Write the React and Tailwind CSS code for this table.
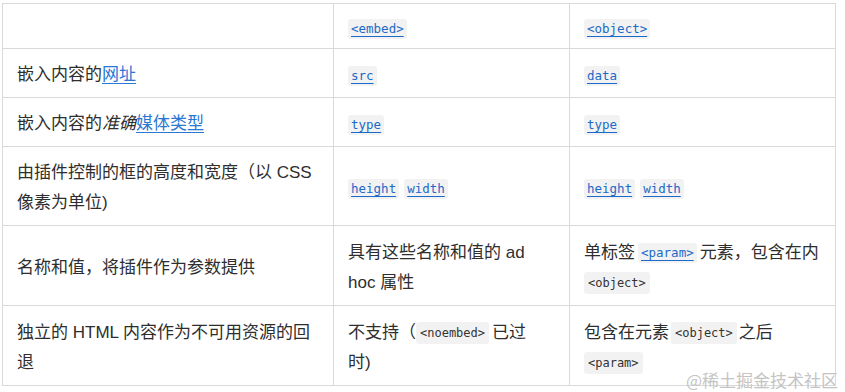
import React from "react";

const body = { fontFamily: '"Liberation Sans", "Noto Sans CJK SC", sans-serif' };
const mono = { fontFamily: '"DejaVu Sans Mono", "Liberation Mono", monospace' };

function CodeLink({ children, className = "" }) {
  return (
    <code
      style={mono}
      className={
        "inline-block rounded-[3px] bg-[#f2f2f2] px-[3px] text-[12.5px] leading-[20px] text-[#1b6ac9] underline decoration-[#1b6ac9] underline-offset-[3px] align-middle " +
        className
      }
    >
      {children}
    </code>
  );
}

function Code({ children, className = "" }) {
  return (
    <code
      style={mono}
      className={
        "inline-block rounded-[3px] bg-[#f2f2f2] px-[4px] text-[12px] leading-[22px] text-[#333] align-middle " +
        className
      }
    >
      {children}
    </code>
  );
}

function Link({ children }) {
  return <span className="text-[#2a77d4] underline underline-offset-[3px]">{children}</span>;
}

const cell = "border border-[#d9d9d9] px-[14px] pt-[4px] align-middle";

export default function App() {
  return (
    <div className="relative h-[392px] w-[845px] bg-white" style={body}>
      <table className="ml-[2px] mt-[3px] border-collapse text-[17px] leading-[30px] text-[#2e2e2e] table-fixed w-[833px]">
        <colgroup>
          <col className="w-[331px]" />
          <col className="w-[236px]" />
          <col className="w-[266px]" />
        </colgroup>
        <tbody>
          <tr className="h-[45px]">
            <td className={cell}></td>
            <td className={cell}>
              <CodeLink>&lt;embed&gt;</CodeLink>
            </td>
            <td className={cell}>
              <CodeLink>&lt;object&gt;</CodeLink>
            </td>
          </tr>
          <tr className="h-[49px]">
            <td className={cell}>
              嵌入内容的<Link>网址</Link>
            </td>
            <td className={cell}>
              <CodeLink>src</CodeLink>
            </td>
            <td className={cell}>
              <CodeLink>data</CodeLink>
            </td>
          </tr>
          <tr className="h-[49px]">
            <td className={cell}>
              嵌入内容的<em>准确</em>
              <Link>媒体类型</Link>
            </td>
            <td className={cell}>
              <CodeLink>type</CodeLink>
            </td>
            <td className={cell}>
              <CodeLink>type</CodeLink>
            </td>
          </tr>
          <tr className="h-[79px]">
            <td className={cell}>
              <span className="whitespace-nowrap">由插件控制的框的高度和宽度（以 CSS</span>
              <br />
              像素为单位)
            </td>
            <td className={cell}>
              <span className="inline-flex gap-[5px]">
                <CodeLink>height</CodeLink>
                <CodeLink>width</CodeLink>
              </span>
            </td>
            <td className={cell}>
              <span className="inline-flex gap-[5px]">
                <CodeLink>height</CodeLink>
                <CodeLink>width</CodeLink>
              </span>
            </td>
          </tr>
          <tr className="h-[80px]">
            <td className={cell}>名称和值，将插件作为参数提供</td>
            <td className={cell}>
              <span className="whitespace-nowrap">具有这些名称和值的 ad</span>
              <br />
              hoc 属性
            </td>
            <td className={cell}>
              <span className="whitespace-nowrap">
                单标签<CodeLink className="mx-[3px]">&lt;param&gt;</CodeLink>元素，包含在内
              </span>
              <br />
              <Code>&lt;object&gt;</Code>
            </td>
          </tr>
          <tr className="h-[80px]">
            <td className={cell}>
              <span className="whitespace-nowrap">独立的 HTML 内容作为不可用资源的回</span>
              <br />
              退
            </td>
            <td className={cell}>
              <span className="whitespace-nowrap">
                不支持（<Code className="mr-[3px]">&lt;noembed&gt;</Code>已过
              </span>
              <br />
              时)
            </td>
            <td className={cell}>
              <span className="whitespace-nowrap">
                包含在元素<Code className="mx-[2px]">&lt;object&gt;</Code>之后
              </span>
              <br />
              <Code>&lt;param&gt;</Code>
            </td>
          </tr>
        </tbody>
      </table>
      <div
        className="absolute right-[7px] bottom-[4px] text-[17px] leading-[22px] text-[#c4c4c4]"
        style={{ fontFamily: '"Noto Sans CJK SC", sans-serif' }}
      >
        @稀土掘金技术社区
      </div>
    </div>
  );
}
